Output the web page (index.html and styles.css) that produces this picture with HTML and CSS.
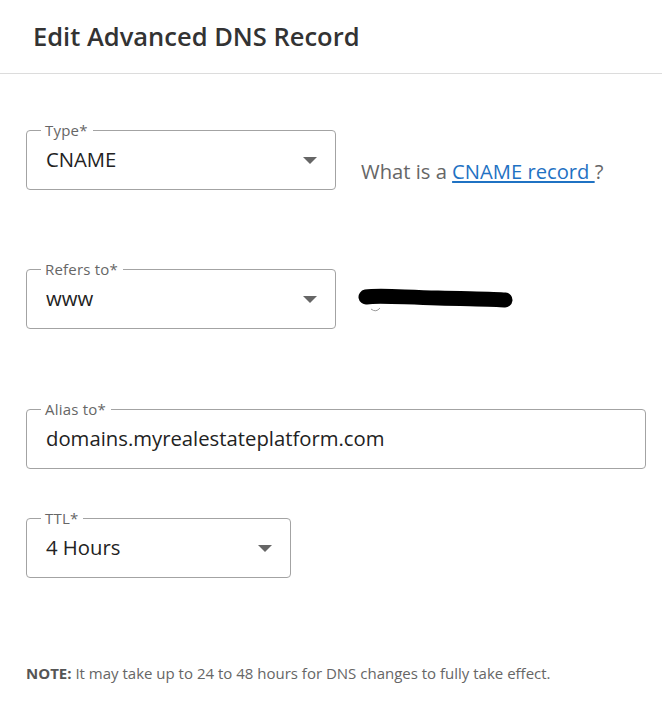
FILE: index.html
```html
<!DOCTYPE html>
<html>
<head>
<meta charset="utf-8">
<link rel="stylesheet" href="styles.css">
</head>
<body>
<div class="dialog">
  <div class="header"><h1 class="title">Edit Advanced DNS Record</h1></div>
  <div class="body">
    <div class="row row-type">
      <fieldset class="field field-md">
        <legend class="field-label">Type*</legend>
        <div class="field-value"><span>CNAME</span><span class="caret"></span></div>
      </fieldset>
      <div class="help">What is a <a class="help-link" href="#">CNAME record </a>?</div>
    </div>
    <div class="row row-refers">
      <fieldset class="field field-md">
        <legend class="field-label">Refers to*</legend>
        <div class="field-value"><span>www</span><span class="caret"></span></div>
      </fieldset>
      <svg class="redact" width="160" height="30" viewBox="0 0 160 30">
        <path d="M22 23 q-4 5 -9 1" fill="none" stroke="#999" stroke-width="1"/>
        <path d="M8 12 C20 10, 40 12, 80 13 S138 14, 147 15" fill="none" stroke="#000" stroke-width="15" stroke-linecap="round"/>
      </svg>
    </div>
    <div class="row row-alias">
      <fieldset class="field field-lg">
        <legend class="field-label">Alias to*</legend>
        <div class="field-value"><span>domains.myrealestateplatform.com</span></div>
      </fieldset>
    </div>
    <div class="row row-ttl">
      <fieldset class="field field-sm">
        <legend class="field-label">TTL*</legend>
        <div class="field-value"><span>4 Hours</span><span class="caret"></span></div>
      </fieldset>
    </div>
    <p class="note"><b>NOTE:</b> It may take up to 24 to 48 hours for DNS changes to fully take effect.</p>
  </div>
</div>
</body>
</html>
```
FILE: styles.css
```css
html, body {
  margin: 0;
  padding: 0;
  background: #fff;
}
body {
  font-family: "Open Sans", "Noto Sans", sans-serif;
  color: #222;
}
.dialog {
  width: 662px;
}
.header {
  height: 74px;
  border-bottom: 1px solid #dcdcdc;
  padding: 0 0 0 33px;
  box-sizing: border-box;
  display: flex;
  align-items: center;
}
.title {
  margin: 0;
  font-size: 25.5px;
  font-weight: 600;
  color: #333;
  line-height: 32px;
  position: relative;
  top: -1px;
}
.body {
  padding: 47px 0 0 26px;
}
.row {
  display: flex;
  align-items: flex-start;
}
.row-refers { margin-top: 70px; }
.row-alias { margin-top: 71px; }
.row-ttl { margin-top: 40px; }
.field {
  margin: 0;
  border: 1px solid #a3a3a3;
  border-radius: 4px;
  padding: 0 18px 0 14px;
  box-sizing: border-box;
  min-width: 0;
}
.field-md { width: 310px; }
.field-lg { width: 620px; }
.field-sm { width: 265px; }
.field-label {
  font-size: 15px;
  line-height: 18px;
  color: #666;
  padding: 0 5px 0 4px;
  margin-left: 0;
  letter-spacing: 0.2px;
}
.field-value {
  height: 26px;
  padding: 7px 0 17px 5px;
  box-sizing: content-box;
  display: flex;
  align-items: center;
  justify-content: space-between;
  font-size: 20.3px;
  line-height: 26px;
  color: #222;
}
.caret {
  width: 0;
  height: 0;
  border-left: 7px solid transparent;
  border-right: 7px solid transparent;
  border-top: 7px solid #666;
  margin-top: 2px;
}
.help {
  margin: 36px 0 0 25px;
  font-size: 20.2px;
  line-height: 28px;
  color: #666;
}
.help-link {
  color: #1f72c3;
  text-decoration: underline;
}
.redact {
  margin: 25px 0 0 22px;
}
.note {
  margin: 85px 0 0 0;
  font-size: 15px;
  line-height: 20px;
  color: #666;
}
.note b {
  font-weight: 700;
  color: #555;
}
```
